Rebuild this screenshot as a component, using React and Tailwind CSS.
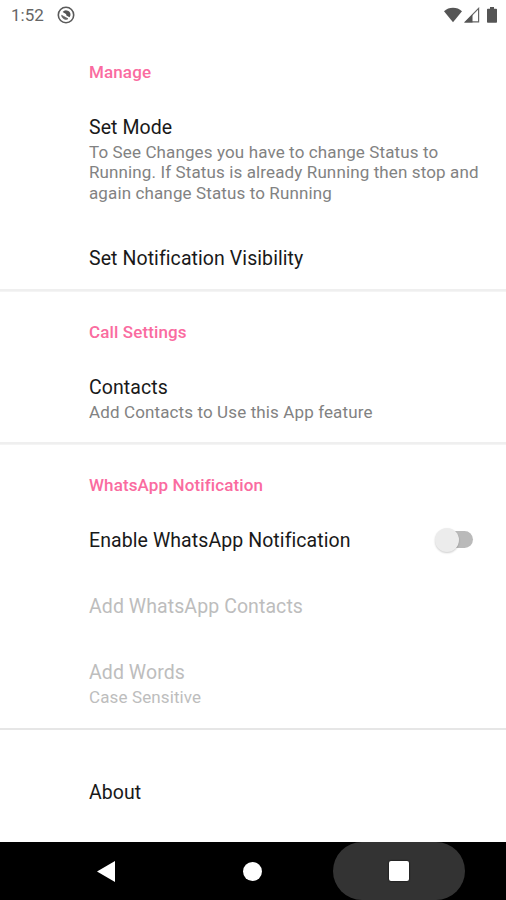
import { useState } from "react";

function StatusBar() {
  return (
    <div className="flex h-[30px] shrink-0 items-center justify-between pl-[11px] pr-[9px] text-[#666]">
      <div className="flex items-center">
        <span className="w-[46px] text-[17px] leading-[30px]">1:52</span>
        <svg width="18" height="18" viewBox="0 0 18 18" fill="none">
          <circle cx="9" cy="9" r="7.700" stroke="#5a5a5a" strokeWidth="1.600" />
          <path d="M5.600 6.100A4.400 4.400 0 0 1 13.400 9.600L12.600 11.200 9.600 9.800 9 8z" fill="#555" />
          <path d="M4.600 9.300 11 12.800A4.300 4.300 0 0 1 4.600 9.300z" fill="#666" stroke="#666" strokeWidth="0.800" />
        </svg>
      </div>
      <div className="flex items-center">
        <svg width="18" height="16" viewBox="0 0 18 16">
          <path d="M0 4.200C2.600 1.900 5.600.8 9 .8s6.400 1.100 9 3.400L9 15.200z" fill="#555" />
        </svg>
        <svg className="ml-[2px]" width="16" height="16" viewBox="0 0 16 16">
          <path d="M1.400 14.800 14.600 1.400v13.400z" fill="none" stroke="#666" strokeWidth="1.200" />
          <path d="M.5 15.400 8.500 7.200v8.200z" fill="#555" />
        </svg>
        <svg className="ml-[7px]" width="10" height="16" viewBox="0 0 10 16">
          <path d="M3 0h4v1.800h2.200q.8 0 .8.800v12.400q0 .8-.8.800H.8q-.8 0-.8-.8V2.600q0-.8.8-.8H3z" fill="#555" />
        </svg>
      </div>
    </div>
  );
}

function Category({ title, children, divider = "" }) {
  return (
    <section className={divider}>
      {title && (
        <h2 className="h-[63px] pl-[89px] pt-[30px] text-[17px] font-medium leading-[22px] tracking-[0.12px] text-[#fa6ba0]">
          {title}
        </h2>
      )}
      {children}
    </section>
  );
}

function Preference({ title, summary, disabled, children }) {
  return (
    <div className={`flex items-center justify-between pt-5 pl-[89px] pr-[21px] ${summary ? "pb-[22px]" : "pb-[18px]"}`}>
      <div className={disabled ? "text-[#bdbdbd]" : "text-[#191919]"}>
        <div className="text-[19.5px] leading-[28px] tracking-[0.08px]">{title}</div>
        {summary && (
          <p className={`text-[17px] leading-[20.33px] tracking-[0.12px] ${disabled ? "" : "text-[#828282]"}`}>
            {summary}
          </p>
        )}
      </div>
      {children}
    </div>
  );
}

function Toggle({ checked, onChange }) {
  return (
    <button
      role="switch"
      aria-checked={checked}
      aria-label="Enable WhatsApp Notification"
      onClick={() => onChange(!checked)}
      className="-mt-[3px] flex h-[24px] w-[49px] items-center"
    >
      <span className={`flex h-[17px] w-[37px] items-center rounded-full bg-[#bababa] ${checked ? "justify-end" : ""}`}>
        <span className="-ml-px h-[24px] w-[24px] shrink-0 rounded-full bg-[#ececec] shadow-[0_1px_2px_rgba(0,0,0,0.2)]" />
      </span>
    </button>
  );
}

function NavBar() {
  return (
    <nav className="flex h-[58px] shrink-0 items-center overflow-hidden bg-black pl-[39px]">
      <button aria-label="Back" className="flex w-[133px] justify-center">
        <svg width="18" height="21" viewBox="0 0 18 21" fill="#fff">
          <path d="M0 10.500 18 0v21z" />
        </svg>
      </button>
      <button aria-label="Home" className="flex w-[161px] justify-center">
        <span className="h-[19px] w-[19px] rounded-full bg-white" />
      </button>
      <button aria-label="Overview" className="flex h-[58px] w-[132px] items-center justify-center rounded-[29px] bg-[#333]">
        <span className="h-[20px] w-[20px] rounded-[2px] bg-white shadow-[0_0_2px_#000]" />
      </button>
    </nav>
  );
}

export default function App() {
  const [enabled, setEnabled] = useState(false);

  return (
    <div className="flex h-[900px] w-[506px] flex-col overflow-hidden bg-white font-['Roboto',sans-serif]">
      <StatusBar />
      <main className="flex-1 pt-px">
        <Category title="Manage" divider="shadow-[inset_0_-2px_0_#efefef,0_1px_0_#f4f4f4]">
          <Preference
            title="Set Mode"
            summary="To See Changes you have to change Status to Running. If Status is already Running then stop and again change Status to Running"
          />
          <Preference title="Set Notification Visibility" />
        </Category>

        <Category title="Call Settings" divider="shadow-[inset_0_-2px_0_#efefef,0_1px_0_#f4f4f4]">
          <Preference title="Contacts" summary="Add Contacts to Use this App feature" />
        </Category>

        <Category title="WhatsApp Notification" divider="shadow-[inset_0_-2px_0_#e6e6e6]">
          <Preference title="Enable WhatsApp Notification">
            <Toggle checked={enabled} onChange={setEnabled} />
          </Preference>
          <Preference title="Add WhatsApp Contacts" disabled={!enabled} />
          <Preference title="Add Words" summary="Case Sensitive" disabled={!enabled} />
        </Category>

        <Category>
          <div className="pt-[29px]">
            <Preference title="About" />
          </div>
        </Category>
      </main>
      <NavBar />
    </div>
  );
}
